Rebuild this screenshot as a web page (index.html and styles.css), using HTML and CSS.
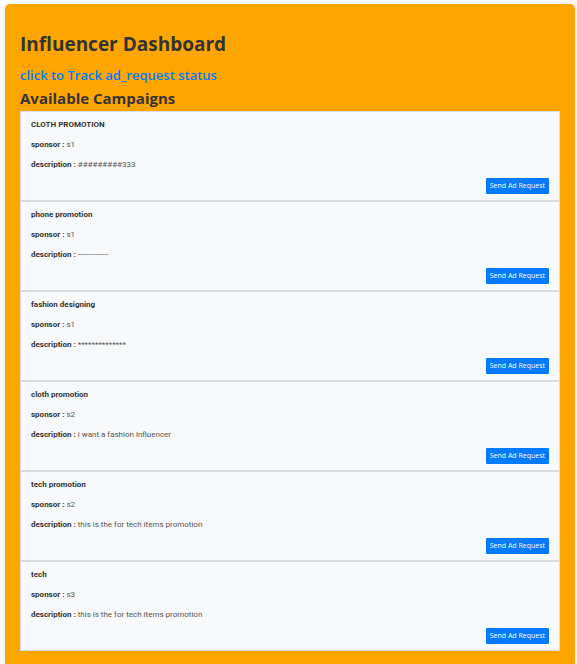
FILE: index.html
```html
<!DOCTYPE html>
<html lang="en">
<head>
<meta charset="utf-8">
<title>Influencer Dashboard</title>
<meta name="viewport" content="width=device-width, initial-scale=1">
<link rel="stylesheet" href="styles.css">
</head>
<body>
<main class="dashboard">
  <h1 class="title">Influencer Dashboard</h1>
  <a class="track-link" href="#status">click to Track ad_request status</a>
  <h2 class="subtitle">Available Campaigns</h2>
  <ul class="campaigns">
    <li class="campaign">
      <h3 class="name">CLOTH PROMOTION</h3>
      <p class="detail"><strong>sponsor :</strong> s1</p>
      <p class="detail"><strong>description :</strong> #########333</p>
      <button class="send" type="button">Send Ad Request</button>
    </li>
    <li class="campaign">
      <h3 class="name">phone promotion</h3>
      <p class="detail"><strong>sponsor :</strong> s1</p>
      <p class="detail"><strong>description :</strong> --------------</p>
      <button class="send" type="button">Send Ad Request</button>
    </li>
    <li class="campaign">
      <h3 class="name">fashion designing</h3>
      <p class="detail"><strong>sponsor :</strong> s1</p>
      <p class="detail"><strong>description :</strong> **************</p>
      <button class="send" type="button">Send Ad Request</button>
    </li>
    <li class="campaign">
      <h3 class="name">cloth promotion</h3>
      <p class="detail"><strong>sponsor :</strong> s2</p>
      <p class="detail"><strong>description :</strong> i want a fashion influencer</p>
      <button class="send" type="button">Send Ad Request</button>
    </li>
    <li class="campaign">
      <h3 class="name">tech promotion</h3>
      <p class="detail"><strong>sponsor :</strong> s2</p>
      <p class="detail"><strong>description :</strong> this is the for tech items promotion</p>
      <button class="send" type="button">Send Ad Request</button>
    </li>
    <li class="campaign">
      <h3 class="name">tech</h3>
      <p class="detail"><strong>sponsor :</strong> s3</p>
      <p class="detail"><strong>description :</strong> this is the for tech items promotion</p>
      <button class="send" type="button">Send Ad Request</button>
    </li>
  </ul>
</main>
</body>
</html>
```
FILE: styles.css
```css
* {
  box-sizing: border-box;
}

body {
  margin: 0;
  padding: 4px 2px 0 5px;
  background: #fff;
  color: #333;
  font-family: "Segoe UI", "Open Sans", "Noto Sans", sans-serif;
}

.dashboard {
  padding: 28px 15px 13px;
  background: #ffa500;
  border-radius: 5px 5px 0 0;
  box-shadow: 0 0 6px rgba(0, 0, 0, 0.1);
}

.title,
.subtitle,
.name,
.detail {
  margin: 0;
}

.title {
  margin-bottom: 9px;
  font-size: 19px;
  line-height: 24px;
  font-weight: 700;
}

.track-link {
  display: block;
  width: fit-content;
  color: #007bff;
  font-size: 13px;
  line-height: 20px;
  font-weight: 600;
  text-decoration: none;
}

.subtitle {
  margin: 2px 0;
  font-size: 15px;
  line-height: 22px;
  font-weight: 700;
}

.campaigns {
  margin: 0;
  padding: 0;
  list-style: none;
}

.campaign {
  display: flex;
  flex-direction: column;
  padding: 3px 10px 6px;
  background: #f8f9fa;
  border: 1px solid #dadcdf;
}

.name,
.detail {
  font-family: "Segoe UI", Roboto, "Open Sans", sans-serif;
  font-size: 8px;
  line-height: 20px;
}

.name {
  font-weight: 700;
}

.detail {
  color: #555;
}

.detail strong {
  color: #333;
  font-weight: 700;
}

.send {
  align-self: flex-end;
  margin-top: 3px;
  padding: 0 4px;
  border: 0;
  border-radius: 1px;
  background: #007bff;
  color: #fff;
  font-family: inherit;
  font-size: 7px;
  line-height: 16px;
  cursor: pointer;
}
```
